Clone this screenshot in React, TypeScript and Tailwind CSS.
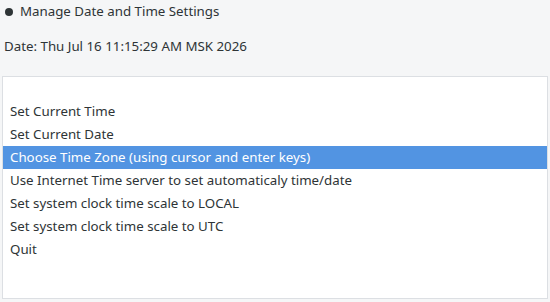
import React from 'react'

const items = [
  '',
  'Set Current Time',
  'Set Current Date',
  'Choose Time Zone (using cursor and enter keys)',
  'Use Internet Time server to set automaticaly time/date',
  'Set system clock time scale to LOCAL',
  'Set system clock time scale to UTC',
  'Quit',
]

const App = () => {
  return (
    <div
      className="w-[550px] h-[302px] bg-[#f5f6f7] text-[#2e3436] text-[13.3px] overflow-hidden"
      style={{ fontFamily: '"Noto Sans", sans-serif' }}
    >
      <div className="flex items-center h-[23px] pl-[4px]">
        <span className="w-[8px] h-[8px] rounded-full bg-[#2e3436] ml-[1px] mr-[7px]" />
        <span>Manage Date and Time Settings</span>
      </div>
      <div className="h-[46px] flex items-center pl-[4px] pt-[1px]">Date: Thu Jul 16 11:15:29 AM MSK 2026</div>
      <div className="mx-[2px] mt-[7px] h-[223px] bg-white border border-[#dcdfe3]">
        {items.map((t, i) => (
          <div
            key={i}
            className={
              'h-[23px] flex items-center pl-[7px] pt-[1px] ' +
              (i === 3 ? 'bg-[#5294e2] text-white' : '')
            }
          >
            {t}
          </div>
        ))}
      </div>
    </div>
  )
}

export default App
